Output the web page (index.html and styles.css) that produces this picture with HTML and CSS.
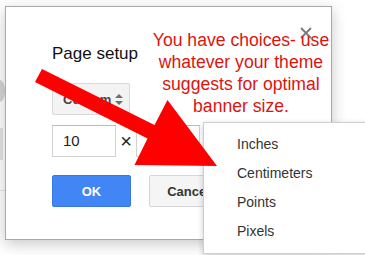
FILE: index.html
```html
<!DOCTYPE html>
<html lang="en">
<head>
  <meta charset="UTF-8" />
  <title>Page setup</title>
  <meta name="viewport" content="width=device-width, initial-scale=1.0" />
  <link rel="stylesheet" href="styles.css">
</head>
<body>
<div class="page">

  <!-- Bits of the document behind the dialog -->
  <div class="behind">
    <div class="behind-knob"></div>
    <div class="behind-bar"></div>
    <div class="behind-line"></div>
  </div>

  <!-- Page setup dialog -->
  <div class="dialog">
    <svg class="close-btn" width="12" height="12" viewBox="0 0 12 12">
      <path d="M1 1 L11 11 M11 1 L1 11" stroke="#7a7a7a" stroke-width="1.8" fill="none" />
    </svg>

    <h2 class="dialog-title">Page setup</h2>

    <div class="select-box">
      <span>Custom</span>
      <span class="updown">
        <svg width="8" height="13" viewBox="0 0 8 13">
          <path d="M0 5 L4 1 L8 5 Z M0 8 L4 12 L8 8 Z" fill="#6f6f6f" />
        </svg>
      </span>
    </div>

    <div class="size-row">
      <div class="num-input">10</div>
      <span class="times">&times;</span>
      <div class="num-input"></div>
    </div>

    <div class="button-row">
      <button class="btn btn-ok">OK</button>
      <button class="btn btn-cancel">Cancel</button>
    </div>
  </div>

  <!-- Unit menu -->
  <ul class="menu">
    <li>Inches</li>
    <li>Centimeters</li>
    <li>Points</li>
    <li>Pixels</li>
  </ul>

  <!-- Annotation -->
  <p class="note">You have choices- use<br>whatever your theme<br>suggests for optimal<br>banner size.</p>

  <svg class="arrow" width="365" height="255" viewBox="0 0 365 255">
    <polygon fill="#ff0000"
      points="42,69 154.5,125 167.5,100 217,166 134.5,165 147.5,138.5 35,82" />
  </svg>

</div>
</body>
</html>
```

FILE: styles.css
```css
body {
  margin: 0;
  background: #fff;
  font-family: "Liberation Sans", Arial, sans-serif;
}
.page {
  position: relative;
  width: 365px;
  height: 255px;
  overflow: hidden;
}
.behind {
  display: flex;
  flex-direction: column;
  width: 5px;
  padding-top: 80px;
}
.behind-knob {
  width: 10px;
  height: 22px;
  margin-left: -5px;
  border-radius: 50%;
  background: #d4d4d4;
}
.behind-bar {
  width: 3px;
  height: 32px;
  margin-top: 26px;
  background: #e2e2e2;
}
.behind-line {
  width: 5px;
  height: 1px;
  margin-top: 30px;
  background: #e4e4e4;
}
.dialog {
  position: absolute;
  left: 5px;
  top: 6px;
  width: 327px;
  height: 234px;
  box-sizing: border-box;
  padding: 37px 0 0 46px;
  background: #fff;
  border: 1px solid #a9a9a9;
  box-shadow: 0 4px 14px rgba(0, 0, 0, 0.22);
}
.close-btn {
  position: absolute;
  right: 19px;
  top: 20px;
}
.dialog-title {
  margin: 0;
  font-size: 17px;
  line-height: 20px;
  font-weight: normal;
  color: #111;
}
.select-box {
  display: flex;
  align-items: center;
  justify-content: space-between;
  box-sizing: border-box;
  width: 78px;
  height: 32px;
  margin-top: 19px;
  padding: 0 6px 0 10px;
  background: #f3f3f3;
  border: 1px solid #dadada;
  border-radius: 2px;
  font-size: 13px;
  font-weight: bold;
  color: #444;
}
.updown {
  display: flex;
}
.size-row {
  display: flex;
  align-items: center;
  margin-top: 10px;
}
.num-input {
  box-sizing: border-box;
  width: 64px;
  height: 32px;
  padding: 0 10px;
  border: 1px solid #d2d2d2;
  border-top-color: #b9b9b9;
  font-size: 15px;
  line-height: 30px;
  color: #222;
}
.times {
  width: 20px;
  font-size: 20px;
  line-height: 20px;
  color: #222;
  text-align: center;
}
.button-row {
  display: flex;
  gap: 18px;
  margin-top: 18px;
}
.btn {
  box-sizing: border-box;
  width: 79px;
  height: 32px;
  padding: 0;
  border-radius: 2px;
  font-family: "Liberation Sans", Arial, sans-serif;
  font-size: 13px;
  font-weight: bold;
}
.btn-ok {
  background: #4285f4;
  border: 1px solid #3b78e7;
  color: #fff;
}
.btn-cancel {
  background: #f5f5f5;
  border: 1px solid #d6d6d6;
  color: #333;
}
.menu {
  position: absolute;
  left: 203px;
  top: 122px;
  width: 180px;
  margin: 0;
  padding: 7px 0;
  list-style: none;
  background: #fff;
  border: 1px solid #cfcfcf;
  box-shadow: 0 2px 6px rgba(0, 0, 0, 0.2);
}
.menu li {
  height: 29px;
  padding-left: 33px;
  font-size: 14px;
  line-height: 29px;
  color: #333;
}
.note {
  position: absolute;
  left: 136px;
  top: 29px;
  width: 210px;
  margin: 0;
  font-size: 17.6px;
  line-height: 22px;
  text-align: center;
  color: #dc140f;
}
.arrow {
  position: absolute;
  left: 0;
  top: 0;
}
```
